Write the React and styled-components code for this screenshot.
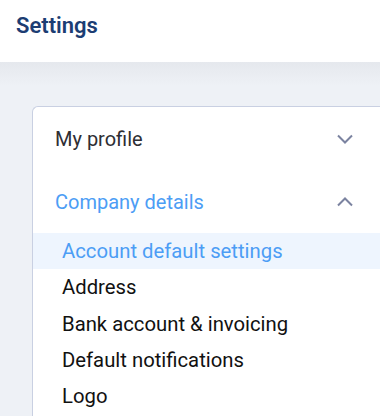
import React from "react";
import styled, { createGlobalStyle } from "styled-components";

const GlobalStyle = createGlobalStyle`
  html, body {
    margin: 0;
    padding: 0;
    background: #eef1f6;
    font-family: Roboto, "Noto Sans", sans-serif;
  }
`;

const Page = styled.div`
  width: 380px;
  height: 416px;
  overflow: hidden;
  display: flex;
  flex-direction: column;
`;

const Header = styled.header`
  height: 62px;
  flex-shrink: 0;
  background: #ffffff;
  display: flex;
  align-items: center;
  padding: 0 16px;
  box-sizing: border-box;
`;

const Title = styled.h1`
  margin: 0 0 11px;
  font-size: 22px;
  font-weight: 600;
  color: #1c3d73;
`;

const Body = styled.main`
  flex: 1;
  background: linear-gradient(#e5e8ed 0, #eef1f6 24px, #eef1f6 100%);
  padding: 44px 0 0 32px;
`;

const Card = styled.nav`
  background: #ffffff;
  border: 1px solid #c9d0e2;
  border-right: none;
  border-bottom: none;
  border-radius: 6px 0 0 0;
  height: 100%;
  box-sizing: border-box;
  padding-top: 11px;
`;

const Section = styled.button`
  display: flex;
  align-items: center;
  justify-content: space-between;
  width: 100%;
  height: 41px;
  padding: 0 27px 0 22px;
  margin-bottom: 22px;
  border: none;
  background: none;
  font-family: inherit;
  font-size: 20px;
  text-align: left;
  color: ${(p) => (p.$open ? "#4c9df5" : "#2e2e33")};
  cursor: pointer;

  &:last-of-type {
    margin-bottom: 0;
  }
`;

const Chevron = ({ up }) => (
  <svg width="16" height="16" viewBox="0 0 16 16" fill="none">
    <path
      d={up ? "M1 11.5 L8 4.5 L15 11.5" : "M1 4.5 L8 11.5 L15 4.5"}
      stroke="#7b83a0"
      strokeWidth="2"
    />
  </svg>
);

const SubList = styled.ul`
  list-style: none;
  margin: 11px 0 0;
  padding: 0;
`;

const SubItem = styled.li`
  height: 36.3px;
  display: flex;
  align-items: center;
  padding-left: 29px;
  font-size: 20.3px;
  color: ${(p) => (p.$active ? "#4c9df5" : "#111111")};
  background: ${(p) => (p.$active ? "#eef5fe" : "transparent")};
`;

const items = [
  "Account default settings",
  "Address",
  "Bank account & invoicing",
  "Default notifications",
  "Logo",
];

export default function App() {
  return (
    <Page>
      <GlobalStyle />
      <Header>
        <Title>Settings</Title>
      </Header>
      <Body>
        <Card>
          <Section>
            My profile
            <Chevron />
          </Section>
          <Section $open>
            Company details
            <Chevron up />
          </Section>
          <SubList>
            {items.map((item, i) => (
              <SubItem key={item} $active={i === 0}>
                {item}
              </SubItem>
            ))}
          </SubList>
        </Card>
      </Body>
    </Page>
  );
}
